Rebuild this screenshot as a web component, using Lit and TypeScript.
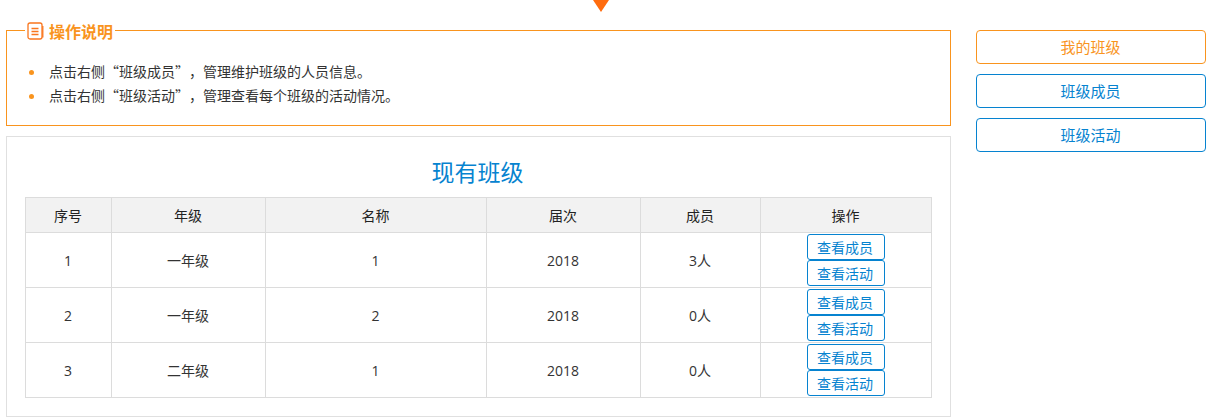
import { LitElement, html, css } from "lit";
import { customElement } from "lit/decorators.js";

const rows = [
  { n: 1, g: "一年级", name: "1", y: "2018", m: "3人" },
  { n: 2, g: "一年级", name: "2", y: "2018", m: "0人" },
  { n: 3, g: "二年级", name: "1", y: "2018", m: "0人" },
];

@customElement("app-root")
export class AppRoot extends LitElement {
  static styles = css`
    :host {
      display: block;
      width: 1212px;
      height: 420px;
      overflow: hidden;
      background: #fff;
      font-family: "Open Sans", "Noto Sans CJK SC", sans-serif;
      color: #333;
      text-spacing-trim: space-all;
    }
    .top { height: 30px; display: flex; justify-content: center; padding-right: 10px; }
    .tri { width: 0; height: 0; border-left: 8px solid transparent; border-right: 8px solid transparent; border-top: 12px solid #ff6c0f; }
    .main { display: flex; align-items: flex-start; padding: 0 6px; gap: 25px; }
    .left { width: 945px; flex: none; display: flex; flex-direction: column; gap: 10px; }
    .right { width: 230px; flex: none; display: flex; flex-direction: column; gap: 10px; }
    .side {
      box-sizing: border-box; height: 34px; border: 1px solid #0683d0; border-radius: 4px; padding: 0 1px 2px 0;
      color: #0683d0; font-size: 15px; display: flex; align-items: center; justify-content: center;
    }
    .side.on { border-color: #f9941e; color: #f9941e; }
    .note {
      box-sizing: border-box; height: 96px; border: 1px solid #f9941e; position: relative;
      padding: 28px 0 0 22px;
    }
    .legend {
      position: absolute; left: 18px; top: -11px; height: 22px; padding: 0 2px; gap: 5px; background: #fff;
      display: flex; align-items: center; color: #f9941e; font-size: 16px; font-weight: 700;
    }
    ul { margin: 0; padding: 0; list-style: none; }
    li {
      height: 24px; line-height: 24px; font-size: 14px; display: flex; align-items: center; gap: 15px; color: #333;
      font-family: "Noto Sans CJK SC", sans-serif;
    }
    li::before { content: ""; width: 5px; height: 5px; border-radius: 50%; background: #f9941e; flex: none; margin-top: 2px; }
    .panel { box-sizing: border-box; height: 281px; border: 1px solid #e0e0e0; padding: 15px 20px 0 18px; }
    h2 { margin: 0; height: 45px; line-height: 40px; text-align: center; color: #0683d0; font-size: 23px; font-weight: 400; }
    table { border-collapse: collapse; table-layout: fixed; width: 906px; font-size: 14px; text-align: center; color: #333; }
    th, td { border: 1px solid #dcdcdc; padding: 0 1px 0 0; }
    th { height: 34px; background: #f2f2f2; font-weight: 400; color: #222; }
    td { height: 54px; }
    .ops { display: flex; flex-direction: column; align-items: center; }
    .btn {
      box-sizing: border-box; width: 78px; height: 26px; border: 1px solid #0683d0; border-radius: 3px; padding-right: 1px;
      color: #0683d0; font-size: 14px; display: flex; align-items: center; justify-content: center; background: #fff;
    }
  `;

  render() {
    return html`
      <div class="top"><div class="tri"></div></div>
      <div class="main">
        <div class="left">
          <div class="note">
            <div class="legend">
              <svg width="17" height="18" viewBox="0 0 17 18" fill="none" stroke="#f9761e" stroke-width="1.3">
                <path d="M3 1h10a2 2 0 0 1 2 2v12a2 2 0 0 1-2 2H3a2 2 0 0 1-2-2V3a2 2 0 0 1 2-2z" />
                <path d="M15.8 4v11.5M4.5 6.5h7M4.5 9.5h7M4.5 12.5h7" />
              </svg>
              <span>操作说明</span>
            </div>
            <ul>
              <li>点击右侧“班级成员”，管理维护班级的人员信息。</li>
              <li>点击右侧“班级活动”，管理查看每个班级的活动情况。</li>
            </ul>
          </div>
          <div class="panel">
            <h2>现有班级</h2>
            <table>
              <colgroup>
                <col style="width:86px" /><col style="width:154px" /><col style="width:221px" />
                <col style="width:154px" /><col style="width:120px" /><col style="width:171px" />
              </colgroup>
              <thead>
                <tr><th>序号</th><th>年级</th><th>名称</th><th>届次</th><th>成员</th><th>操作</th></tr>
              </thead>
              <tbody>
                ${rows.map(
                  (r) => html`<tr>
                    <td>${r.n}</td><td>${r.g}</td><td>${r.name}</td><td>${r.y}</td><td>${r.m}</td>
                    <td><div class="ops"><div class="btn">查看成员</div><div class="btn">查看活动</div></div></td>
                  </tr>`
                )}
              </tbody>
            </table>
          </div>
        </div>
        <div class="right">
          <div class="side on">我的班级</div>
          <div class="side">班级成员</div>
          <div class="side">班级活动</div>
        </div>
      </div>
    `;
  }
}
